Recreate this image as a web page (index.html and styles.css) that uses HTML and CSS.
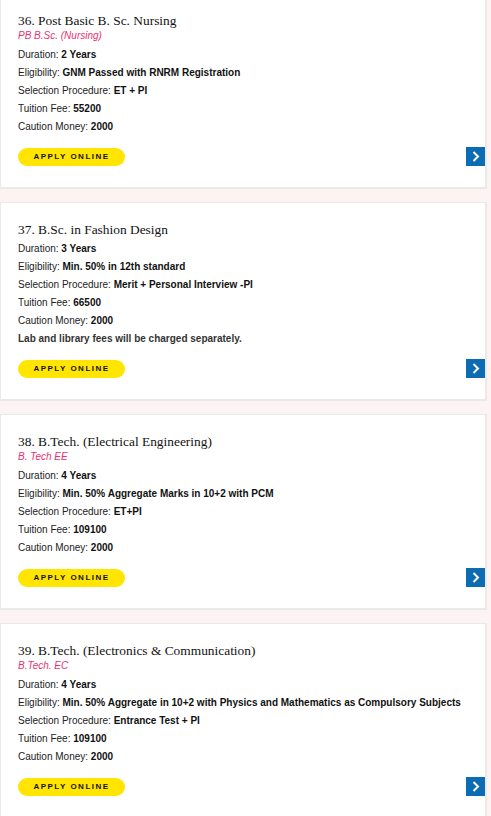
FILE: index.html
```html
<!DOCTYPE html>
<html lang="en">
<head>
<meta charset="utf-8">
<title>Courses</title>
<link rel="stylesheet" href="styles.css">
</head>
<body>
<div class="list">
  <div class="card">
    <h3 class="title">36. Post Basic B. Sc. Nursing</h3>
    <div class="sub">PB B.Sc. (Nursing)</div>
    <div class="info">
      <p>Duration: <b>2 Years</b></p>
      <p>Eligibility: <b>GNM Passed with RNRM Registration</b></p>
      <p>Selection Procedure: <b>ET + PI</b></p>
      <p>Tuition Fee: <b>55200</b></p>
      <p>Caution Money: <b>2000</b></p>
    </div>
    <div class="actions">
      <a class="apply" href="#">APPLY ONLINE</a>
      <a class="arrow" href="#"><svg viewBox="0 0 19 19" width="19" height="19"><path d="M7.5 5 L12 9.5 L7.5 14" fill="none" stroke="#fff" stroke-width="2"/></svg></a>
    </div>
  </div>
  <div class="card">
    <h3 class="title">37. B.Sc. in Fashion Design</h3>
    <div class="info">
      <p>Duration: <b>3 Years</b></p>
      <p>Eligibility: <b>Min. 50% in 12th standard</b></p>
      <p>Selection Procedure: <b>Merit + Personal Interview -PI</b></p>
      <p>Tuition Fee: <b>66500</b></p>
      <p>Caution Money: <b>2000</b></p>
      <p class="note">Lab and library fees will be charged separately.</p>
    </div>
    <div class="actions">
      <a class="apply" href="#">APPLY ONLINE</a>
      <a class="arrow" href="#"><svg viewBox="0 0 19 19" width="19" height="19"><path d="M7.5 5 L12 9.5 L7.5 14" fill="none" stroke="#fff" stroke-width="2"/></svg></a>
    </div>
  </div>
  <div class="card">
    <h3 class="title">38. B.Tech. (Electrical Engineering)</h3>
    <div class="sub">B. Tech EE</div>
    <div class="info">
      <p>Duration: <b>4 Years</b></p>
      <p>Eligibility: <b>Min. 50% Aggregate Marks in 10+2 with PCM</b></p>
      <p>Selection Procedure: <b>ET+PI</b></p>
      <p>Tuition Fee: <b>109100</b></p>
      <p>Caution Money: <b>2000</b></p>
    </div>
    <div class="actions">
      <a class="apply" href="#">APPLY ONLINE</a>
      <a class="arrow" href="#"><svg viewBox="0 0 19 19" width="19" height="19"><path d="M7.5 5 L12 9.5 L7.5 14" fill="none" stroke="#fff" stroke-width="2"/></svg></a>
    </div>
  </div>
  <div class="card">
    <h3 class="title">39. B.Tech. (Electronics &amp; Communication)</h3>
    <div class="sub">B.Tech. EC</div>
    <div class="info">
      <p>Duration: <b>4 Years</b></p>
      <p>Eligibility: <b>Min. 50% Aggregate in 10+2 with Physics and Mathematics as Compulsory Subjects</b></p>
      <p>Selection Procedure: <b>Entrance Test + PI</b></p>
      <p>Tuition Fee: <b>109100</b></p>
      <p>Caution Money: <b>2000</b></p>
    </div>
    <div class="actions">
      <a class="apply" href="#">APPLY ONLINE</a>
      <a class="arrow" href="#"><svg viewBox="0 0 19 19" width="19" height="19"><path d="M7.5 5 L12 9.5 L7.5 14" fill="none" stroke="#fff" stroke-width="2"/></svg></a>
    </div>
  </div>
</div>
</body>
</html>
```
FILE: styles.css
```css
html, body {
  margin: 0;
  padding: 0;
  background: #fdf3f3;
}
body {
  font-family: "Liberation Sans", Arial, sans-serif;
  color: #222;
}
.list {
  margin-top: -7px;
  padding-right: 4px;
}
.card {
  background: #fff;
  border: 1px solid #e9e9e9;
  border-right-width: 2px;
  border-bottom-width: 2px;
  padding: 18px 0 21px 17px;
  margin-bottom: 13px;
}
.title {
  margin: 0;
  font-family: "Liberation Serif", "Times New Roman", serif;
  font-weight: normal;
  font-size: 13.4px;
  line-height: 18px;
  color: #111;
}
.sub {
  font-size: 10px;
  line-height: 14px;
  font-style: italic;
  color: #e8326f;
  margin-top: -1px;
  margin-bottom: 3px;
}
.info {
  margin-top: 1px;
}
.info p {
  margin: 0;
  font-size: 10px;
  line-height: 18px;
  color: #222;
}
.info b {
  color: #111;
}
.info .note {
  font-weight: bold;
  color: #333;
}
.actions {
  display: flex;
  justify-content: space-between;
  align-items: center;
  margin-top: 11px;
}
.apply {
  display: inline-block;
  width: 107px;
  height: 18px;
  line-height: 18px;
  background: #ffe500;
  border-radius: 9px;
  text-align: center;
  font-size: 8px;
  font-weight: bold;
  letter-spacing: 1.5px;
  color: #111;
  text-decoration: none;
}
.arrow {
  display: block;
  width: 19px;
  height: 19px;
  background: #0b6cb3;
}
.arrow svg {
  display: block;
}
```
